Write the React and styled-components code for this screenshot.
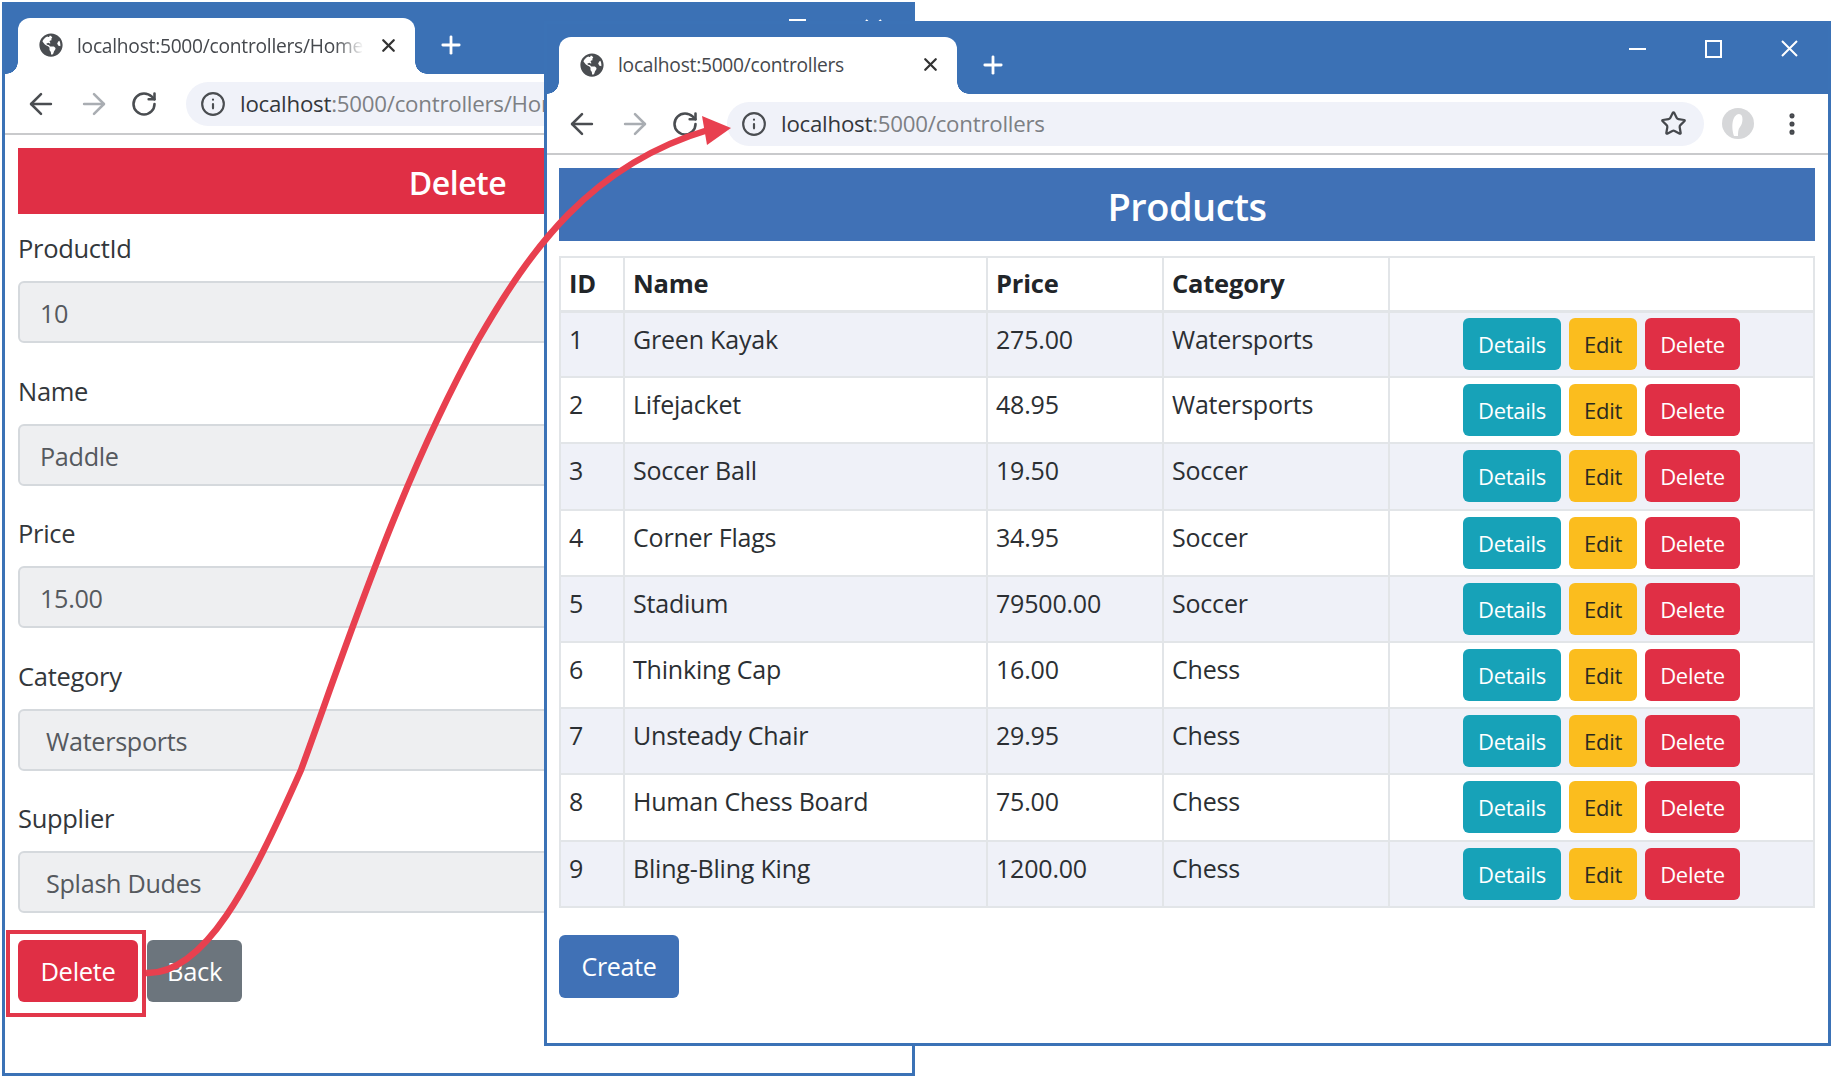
import React from "react";
import styled, { createGlobalStyle } from "styled-components";
import { ArrowLeft, ArrowRight, RotateCw, Info, Star, MoreVertical, X, Plus } from "lucide-react";
import { FaGlobeAmericas } from "react-icons/fa";

const products = [
  [1, "Green Kayak", "275.00", "Watersports"],
  [2, "Lifejacket", "48.95", "Watersports"],
  [3, "Soccer Ball", "19.50", "Soccer"],
  [4, "Corner Flags", "34.95", "Soccer"],
  [5, "Stadium", "79500.00", "Soccer"],
  [6, "Thinking Cap", "16.00", "Chess"],
  [7, "Unsteady Chair", "29.95", "Chess"],
  [8, "Human Chess Board", "75.00", "Chess"],
  [9, "Bling-Bling King", "1200.00", "Chess"],
];

const fields = [
  ["ProductId", "10", 20],
  ["Name", "Paddle", 20],
  ["Price", "15.00", 20],
  ["Category", "Watersports", 26],
  ["Supplier", "Splash Dudes", 26],
];

const GlobalStyle = createGlobalStyle`
  html, body {
    margin: 0;
    padding: 0;
    background: #fff;
  }
  body {
    font-family: "Open Sans", "Noto Sans", sans-serif;
    color: #212529;
  }
`;

const Desktop = styled.div`
  position: relative;
  width: 1832px;
  height: 1077px;
  overflow: hidden;
  background: #fff;
`;

const Window = styled.div`
  position: absolute;
  left: ${(p) => p.$left}px;
  top: ${(p) => p.$top}px;
  width: ${(p) => p.$width}px;
  height: ${(p) => p.$height}px;
  box-sizing: border-box;
  border: 3px solid #3b72b6;
  background: #fff;
  overflow: hidden;
  display: flex;
  flex-direction: column;
`;

const TitleBar = styled.div`
  display: flex;
  align-items: flex-end;
  flex: none;
  height: ${(p) => p.$height}px;
  padding-left: ${(p) => p.$pad}px;
  background: #3b71b5;
`;

const Tab = styled.div`
  position: relative;
  display: flex;
  align-items: center;
  box-sizing: border-box;
  width: ${(p) => p.$width}px;
  height: ${(p) => p.$height}px;
  padding: 0 16px 2px 21px;
  background: #fff;
  border-radius: 12px 12px 0 0;
  flex: none;

  &::before,
  &::after {
    content: "";
    position: absolute;
    bottom: 0;
    width: 12px;
    height: 12px;
  }
  &::before {
    left: -12px;
    background: radial-gradient(circle at 0 0, #3b71b5 11.5px, #fff 12px);
  }
  &::after {
    right: -12px;
    background: radial-gradient(circle at 100% 0, #3b71b5 11.5px, #fff 12px);
  }
`;

const TabTitle = styled.span`
  flex: 1;
  margin-left: 14px;
  font-size: 19.2px;
  letter-spacing: -0.25px;
  color: #45484d;
  white-space: nowrap;
  -webkit-mask-image: ${(p) =>
    p.$fade ? "linear-gradient(90deg, #000 90%, transparent)" : "none"};
  mask-image: ${(p) =>
    p.$fade ? "linear-gradient(90deg, #000 90%, transparent)" : "none"};
`;

const NewTab = styled.div`
  display: flex;
  align-items: center;
  justify-content: center;
  margin: 0 0 7px 22px;
  height: 44px;
  color: #fff;
`;

const Controls = styled.div`
  display: flex;
  align-self: flex-start;
  gap: 59px;
  margin-left: auto;
  margin-top: ${(p) => p.$top}px;
  margin-right: 30px;
  color: #fff;
`;

const Toolbar = styled.div`
  display: flex;
  align-items: center;
  flex: none;
  box-sizing: border-box;
  height: 61px;
  padding: 0 0 0 ${(p) => p.$pad}px;
  gap: 19px;
  border-bottom: 2px solid #c9cacc;
  background: #fff;
`;

const NavIcon = styled.span`
  display: flex;
  color: ${(p) => (p.$dim ? "#a9adb2" : "#4a4d51")};
`;

const UrlBar = styled.div`
  display: flex;
  align-items: center;
  flex: 1;
  height: 44px;
  margin-left: 9px;
  padding: 0 17px 0 14px;
  border-radius: 22px;
  background: #f0f2f9;
  font-size: 22.3px;
  letter-spacing: -0.25px;
  white-space: nowrap;
  overflow: hidden;
  min-width: 0;
`;

const Host = styled.span`
  margin-left: 14px;
  color: #34373b;
`;

const UrlPath = styled.span`
  flex: 1;
  color: #7d8084;
`;

const ToolbarEnd = styled.div`
  display: flex;
  align-items: center;
  gap: 24px;
  margin: 0 22px 0 -1px;
  color: #45484d;
`;

const Body = styled.div`
  display: flex;
  flex-direction: column;
  padding: 13px ${(p) => p.$right}px 0 ${(p) => p.$left}px;
`;

const Banner = styled.div`
  display: flex;
  align-items: center;
  justify-content: center;
  box-sizing: border-box;
  height: ${(p) => p.$height}px;
  padding-top: 3px;
  background: ${(p) => p.$bg};
  color: #fff;
  font-size: ${(p) => p.$size}px;
  font-weight: 600;
  letter-spacing: -0.5px;
`;

const Form = styled.div`
  display: flex;
  flex-direction: column;
  padding-top: 17px;
`;

const Field = styled.div`
  display: flex;
  flex-direction: column;
  margin-bottom: 30.5px;
`;

const Label = styled.label`
  height: 34px;
  line-height: 34px;
  margin-bottom: 16px;
  font-size: 25.5px;
  letter-spacing: -0.3px;
  color: #33373b;
`;

const ReadOnly = styled.div`
  box-sizing: border-box;
  height: 62px;
  line-height: 60px;
  padding-left: ${(p) => p.$pad}px;
  border: 2px solid #d5d9dd;
  border-radius: 6px;
  background: #eeeff1;
  color: #55595e;
  font-size: 25.2px;
  letter-spacing: -0.3px;
`;

const ButtonRow = styled.div`
  display: flex;
  gap: ${(p) => p.$gap}px;
  margin-top: ${(p) => p.$top || 0}px;
`;

const Button = styled.div`
  display: flex;
  align-items: center;
  justify-content: center;
  box-sizing: border-box;
  width: ${(p) => p.$width}px;
  height: ${(p) => p.$height}px;
  border-radius: 6px;
  background: ${(p) => p.$bg};
  color: ${(p) => p.$fg || "#fff"};
  font-size: ${(p) => p.$size || 22}px;
  letter-spacing: -0.3px;
`;

const Table = styled.table`
  width: 1254px;
  margin-top: 15px;
  table-layout: fixed;
  border-collapse: collapse;
  font-size: 25px;
  letter-spacing: -0.2px;
  color: #2b2f33;
`;

const Th = styled.th`
  height: 54px;
  padding: 0 0 2px 8px;
  box-sizing: border-box;
  border: 2px solid #e2e5e8;
  border-bottom-width: 3px;
  text-align: left;
  font-size: 25.5px;
  font-weight: 700;
  color: #212529;
`;

const Row = styled.tr`
  background: ${(p) => (p.$striped ? "#eff1f8" : "#fff")};
`;

const Td = styled.td`
  height: 66.2px;
  padding: 9px 0 0 8px;
  box-sizing: border-box;
  border: 2px solid #e2e5e8;
  vertical-align: top;
  line-height: 34px;
`;

const ActionCell = styled.td`
  height: 66.2px;
  padding: 0;
  box-sizing: border-box;
  border: 2px solid #e2e5e8;
  vertical-align: middle;
`;

const Actions = styled(ButtonRow)`
  justify-content: center;
`;

const Annotation = styled.div`
  position: absolute;
  left: 6px;
  top: 930px;
  width: 140px;
  height: 87px;
  box-sizing: border-box;
  border: 4px solid #e2374a;
`;

const Overlay = styled.svg`
  position: absolute;
  left: 0;
  top: 0;
  pointer-events: none;
`;

const WindowIcons = () => (
  <>
    <svg width="17" height="17" viewBox="0 0 17 17" fill="none" stroke="currentColor" strokeWidth="2">
      <path d="M0 9h17" />
    </svg>
    <svg width="17" height="18" viewBox="0 0 17 18" fill="none" stroke="currentColor" strokeWidth="2">
      <rect x="1" y="1" width="15" height="16" />
    </svg>
    <svg width="17" height="17" viewBox="0 0 17 17" fill="none" stroke="currentColor" strokeWidth="2">
      <path d="M1 1l15 15M16 1L1 16" />
    </svg>
  </>
);

const Avatar = () => (
  <svg width="32" height="31" viewBox="0 0 32 31">
    <ellipse cx="16" cy="15.5" rx="16" ry="15.5" fill="#d6d7d9" />
    <path d="M12 28c-3-9-2-21 5-22 5 0 4 10 1 13-2 2-2 6-2 9z" fill="#fff" />
  </svg>
);

const Nav = () => (
  <>
    <NavIcon>
      <ArrowLeft size={34} strokeWidth={1.8} />
    </NavIcon>
    <NavIcon $dim>
      <ArrowRight size={34} strokeWidth={1.8} />
    </NavIcon>
    <NavIcon>
      <RotateCw size={28} strokeWidth={2.2} />
    </NavIcon>
  </>
);

const App = () => (
  <Desktop>
    <GlobalStyle />

    <Window $left={2} $top={2} $width={913} $height={1074}>
      <TitleBar $height={69} $pad={13}>
        <Tab $width={397} $height={56}>
          <FaGlobeAmericas size={24} color="#4a4d51" />
          <TabTitle $fade>localhost:5000/controllers/Home</TabTitle>
          <X size={21} strokeWidth={2.6} color="#333" style={{ marginLeft: 14 }} />
        </Tab>
        <NewTab>
          <Plus size={28} strokeWidth={2.4} />
        </NewTab>
        <Controls $top={14}>
          <WindowIcons />
        </Controls>
      </TitleBar>
      <Toolbar $pad={19}>
        <Nav />
        <UrlBar>
          <Info size={26} strokeWidth={2} color="#4a4d51" />
          <Host>localhost</Host>
          <UrlPath>:5000/controllers/Home/Details/10</UrlPath>
        </UrlBar>
      </Toolbar>
      <Body $left={13} $right={15}>
        <Banner $height={66} $bg="#e02f45" $size={32}>
          Delete
        </Banner>
        <Form>
          {fields.map(([label, value, pad]) => (
            <Field key={label}>
              <Label>{label}</Label>
              <ReadOnly $pad={pad}>{value}</ReadOnly>
            </Field>
          ))}
          <ButtonRow $gap={9} $top={-4}>
            <Button $width={120} $height={62} $bg="#e02f45" $size={25.5}>
              Delete
            </Button>
            <Button $width={95} $height={62} $bg="#6c757d" $size={25.5}>
              Back
            </Button>
          </ButtonRow>
        </Form>
      </Body>
    </Window>

    <Window $left={544} $top={21} $width={1287} $height={1025}>
      <TitleBar $height={70} $pad={12}>
        <Tab $width={398} $height={57}>
          <FaGlobeAmericas size={24} color="#4a4d51" />
          <TabTitle>localhost:5000/controllers</TabTitle>
          <X size={21} strokeWidth={2.6} color="#333" />
        </Tab>
        <NewTab>
          <Plus size={28} strokeWidth={2.4} />
        </NewTab>
        <Controls $top={16}>
          <WindowIcons />
        </Controls>
      </TitleBar>
      <Toolbar $pad={18}>
        <Nav />
        <UrlBar>
          <Info size={26} strokeWidth={2} color="#4a4d51" />
          <Host>localhost</Host>
          <UrlPath>:5000/controllers</UrlPath>
          <Star size={27} strokeWidth={2} color="#45484d" />
        </UrlBar>
        <ToolbarEnd>
          <Avatar />
          <MoreVertical size={28} strokeWidth={2.4} />
        </ToolbarEnd>
      </Toolbar>
      <Body $left={12} $right={13}>
        <Banner $height={73} $bg="#4071b6" $size={38}>
          Products
        </Banner>
        <Table>
          <colgroup>
            <col width="64" />
            <col width="363" />
            <col width="176" />
            <col width="226" />
            <col width="425" />
          </colgroup>
          <thead>
            <tr>
              <Th>ID</Th>
              <Th>Name</Th>
              <Th>Price</Th>
              <Th>Category</Th>
              <Th />
            </tr>
          </thead>
          <tbody>
            {products.map(([id, name, price, category]) => (
              <Row key={id} $striped={id % 2 === 1}>
                <Td>{id}</Td>
                <Td>{name}</Td>
                <Td>{price}</Td>
                <Td>{category}</Td>
                <ActionCell>
                  <Actions $gap={8}>
                    <Button $width={98} $height={52} $bg="#17a2b8">
                      Details
                    </Button>
                    <Button $width={68} $height={52} $bg="#fbbd1e" $fg="#2b2a20">
                      Edit
                    </Button>
                    <Button $width={95} $height={52} $bg="#e02f45">
                      Delete
                    </Button>
                  </Actions>
                </ActionCell>
              </Row>
            ))}
          </tbody>
        </Table>
        <ButtonRow $gap={0} $top={27}>
          <Button $width={120} $height={63} $bg="#4071b6" $size={25}>
            Create
          </Button>
        </ButtonRow>
      </Body>
    </Window>

    <Annotation />
    <Overlay width="1832" height="1077" viewBox="0 0 1832 1077" fill="none">
      <path
        d="M146 973C205 975 250 885 301 770C345 650 400 480 478 340C530 250 590 165 708 130"
        stroke="#e8404f"
        strokeWidth="6.5"
      />
      <path d="M731 128L702 116L707 145z" fill="#e8404f" />
    </Overlay>
  </Desktop>
);

export default App;
